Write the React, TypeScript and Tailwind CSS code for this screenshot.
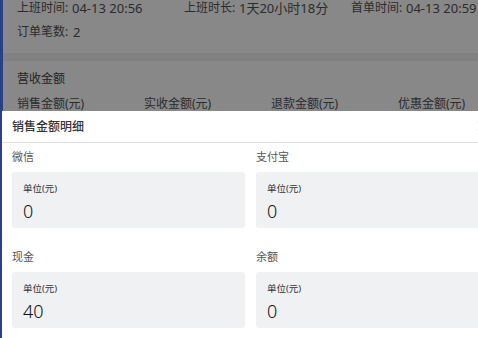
import React from "react";

const font = { fontFamily: '"Noto Sans", "Noto Sans CJK SC", sans-serif' };

function Card({ label, value }: { label: string; value: string }) {
  return (
    <div className="flex flex-col">
      <div className="pt-[6px] text-[11px] leading-[16px] text-[#555]">{label}</div>
      <div className="mt-[7px] h-[56px] rounded-[3px] bg-[#f0f1f3] px-[11px] pt-[10px]">
        <div className="text-[9.5px] leading-[14px] text-[#333]">单位(元)</div>
        <div className="mt-[4px] text-[18px] font-light leading-[22px] text-[#111]">{value}</div>
      </div>
    </div>
  );
}

export default function App() {
  const top1 = [
    ["上班时间:", "04-13 20:56"],
    ["上班时长:", "1天20小时18分"],
    ["首单时间:", "04-13 20:59"],
  ];
  return (
    <div className="flex h-[338px] w-[478px] overflow-hidden bg-white" style={font}>
      <div className="w-[2px] shrink-0 bg-[#2c3e84]" />
      <div className="flex min-w-0 flex-1 flex-col">
        {/* dimmed page */}
        <div className="h-[111px] shrink-0 overflow-hidden border-l border-[#2c3e84] bg-[#888888] text-[#2b2b2b]">
          <div className="h-[53px] pl-[14px]">
            <div className="flex text-[12px] leading-[16px]">
              {top1.map(([k, v]) => (
                <div key={k} className="flex w-[167px] shrink-0">
                  <span className="w-[55px] shrink-0">{k}</span>
                  <span className="text-[13px]">{v}</span>
                </div>
              ))}
            </div>
            <div className="mt-[8px] flex text-[12px] leading-[16px]">
              <span className="w-[56px] shrink-0">订单笔数:</span>
              <span className="text-[13px]">2</span>
            </div>
          </div>
          <div className="h-[8px] bg-[#818181]" />
          <div className="pl-[14px] pt-[10px]">
            <div className="text-[12px] leading-[16px] text-[#222]">营收金额</div>
            <div className="mt-[9px] flex text-[12px] leading-[16px]">
              {["销售金额(元)", "实收金额(元)", "退款金额(元)", "优惠金额(元)"].map((t) => (
                <div key={t} className="w-[127px] shrink-0">
                  {t}
                </div>
              ))}
            </div>
          </div>
        </div>
        {/* drawer */}
        <div className="relative flex-1 bg-white">
          <div className="flex h-[32px] items-center border-b border-[#e0e0e0] pl-[10px] text-[12px] font-medium text-[#333]">
            销售金额明细
          </div>
          <svg
            className="absolute left-[475px] top-[10px]"
            width="10"
            height="10"
            viewBox="0 0 10 10"
          >
            <path d="M1 1 L9 9 M9 1 L1 9" stroke="#f0a24e" strokeWidth="1.3" />
          </svg>
          <div className="grid w-[477px] grid-cols-[233px_233px] gap-x-[11px] gap-y-[15px] pl-[10px]">
            <Card label="微信" value="0" />
            <Card label="支付宝" value="0" />
            <Card label="现金" value="40" />
            <Card label="余额" value="0" />
          </div>
        </div>
      </div>
    </div>
  );
}
